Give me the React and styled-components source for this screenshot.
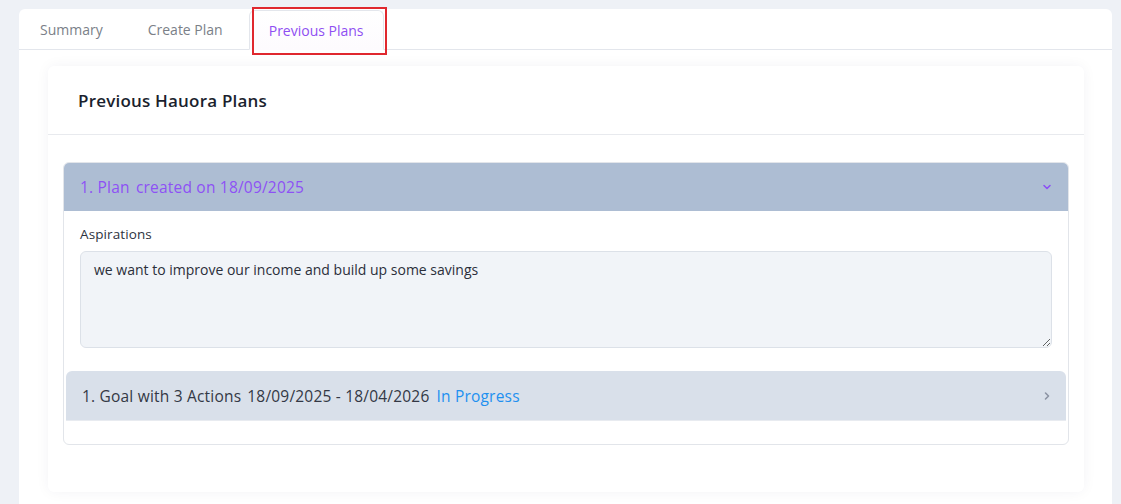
import React from 'react';
import styled, { createGlobalStyle } from 'styled-components';

const GlobalStyle = createGlobalStyle`
  body {
    margin: 0;
    background: #eef1f6;
    font-family: "Open Sans", "Noto Sans", sans-serif;
  }
`;

const Page = styled.div`
  padding: 9px 9px 0 19px;
  height: 504px;
  box-sizing: border-box;
  overflow: hidden;
`;

const Shell = styled.div`
  background: #fff;
  border-radius: 6px 6px 0 0;
  height: 100%;
`;

const Tabs = styled.div`
  display: flex;
  align-items: flex-end;
  height: 41px;
  border-bottom: 1px solid #e3e6ec;
  padding-left: 1px;
  box-sizing: border-box;
`;

const Tab = styled.div`
  position: relative;
  height: 40px;
  display: flex;
  align-items: center;
  padding: 1px 19px 0;
  box-sizing: border-box;
  font-size: 14px;
  color: ${(p) => (p.$active ? '#8f4ff2' : '#7b7f88')};
  margin-bottom: ${(p) => (p.$active ? '-1px' : '0')};
  background: ${(p) => (p.$active ? 'linear-gradient(#fff, #fdfbfe)' : 'transparent')};
  border: 1px solid ${(p) => (p.$active ? '#e3e6ec' : 'transparent')};
  border-bottom-color: ${(p) => (p.$active ? '#fdfbfe' : 'transparent')};
  border-radius: 6px 6px 0 0;
  margin-left: ${(p) => p.$ml || '0'};
`;

const Highlight = styled.span`
  position: absolute;
  left: 2px;
  right: -4px;
  top: -4px;
  bottom: -6px;
  border: 2px solid #e0282e;
  pointer-events: none;
`;

const Body = styled.div`
  padding: 16px 28px 0 29px;
`;

const Card = styled.div`
  background: #fff;
  border-radius: 6px;
  box-shadow: 0 0 14px rgba(30, 40, 70, 0.05);
  height: 426px;
`;

const CardHeader = styled.div`
  height: 69px;
  display: flex;
  align-items: center;
  padding-left: 30px;
  border-bottom: 1px solid #e8eaee;
  font-size: 17px;
  font-weight: 600;
  letter-spacing: 0.2px;
  color: #1b1f2e;
  box-sizing: border-box;
`;

const CardBody = styled.div`
  padding: 27px 15px 0 15px;
`;

const Accordion = styled.div`
  border: 1px solid #e2e5ea;
  border-radius: 6px;
  overflow: hidden;
  padding-bottom: 23px;
`;

const AccHead = styled.div`
  height: 48px;
  background: #adbdd3;
  display: flex;
  align-items: center;
  justify-content: space-between;
  padding: 0 16px;
  font-size: 15.5px;
  letter-spacing: 0.2px;
  color: #8d51f5;
`;

const AccBody = styled.div`
  padding: 14px 16px 0 16px;
`;

const Label = styled.div`
  font-size: 13.5px;
  letter-spacing: 0.1px;
  color: #2e3340;
  margin-bottom: 8px;
`;

const TextArea = styled.textarea`
  display: block;
  width: 100%;
  height: 97px;
  box-sizing: border-box;
  background: #f1f4f8;
  border: 1px solid #dce1e8;
  border-radius: 6px;
  padding: 8px 13px;
  font-family: inherit;
  font-size: 14px;
  color: #2b2f3a;
  resize: vertical;
  outline: none;
`;

const GoalRow = styled.div`
  margin: 23px -14px 0 -14px;
  height: 50px;
  background: #d9e0ea;
  border-radius: 6px 6px 0 0;
  border-bottom: 1px solid #e8ebf0;
  display: flex;
  align-items: center;
  padding: 0 14px 0 16px;
  font-size: 15.5px;
  letter-spacing: 0.2px;
  color: #333845;
  box-sizing: border-box;
`;

const Gap = styled.span`
  margin-left: ${(p) => p.$w}px;
`;

const Status = styled.span`
  color: #1e90f0;
  margin-left: 7px;
`;

const Push = styled.span`
  margin-left: auto;
  display: flex;
`;

const Chevron = ({ dir, color }) => (
  <svg width="10" height="10" viewBox="0 0 10 10" fill="none">
    <path
      d={dir === 'down' ? 'M2 3.5 L5 6.5 L8 3.5' : 'M3.5 2 L6.5 5 L3.5 8'}
      stroke={color}
      strokeWidth="1.6"
      strokeLinecap="round"
      strokeLinejoin="round"
    />
  </svg>
);

export default function App() {
  return (
    <>
      <GlobalStyle />
      <Page>
        <Shell>
          <Tabs>
            <Tab>Summary</Tab>
            <Tab $ml="5px">Create Plan</Tab>
            <Tab $active $ml="6px">
              Previous Plans
              <Highlight />
            </Tab>
          </Tabs>
          <Body>
            <Card>
              <CardHeader>Previous Hauora Plans</CardHeader>
              <CardBody>
                <Accordion>
                  <AccHead>
                    <span>
                      1. Plan <Gap $w={2} />created on 18/09/2025
                    </span>
                    <Chevron dir="down" color="#8d51f5" />
                  </AccHead>
                  <AccBody>
                    <Label>Aspirations</Label>
                    <TextArea
                      readOnly
                      defaultValue="we want to improve our income and build up some savings"
                    />
                    <GoalRow>
                      <span>1. Goal with 3 Actions</span>
                      <Gap $w={6} />
                      <span>18/09/2025 - 18/04/2026</span>
                      <Status>In Progress</Status>
                      <Push>
                        <Chevron dir="right" color="#8c93a3" />
                      </Push>
                    </GoalRow>
                  </AccBody>
                </Accordion>
              </CardBody>
            </Card>
          </Body>
        </Shell>
      </Page>
    </>
  );
}
